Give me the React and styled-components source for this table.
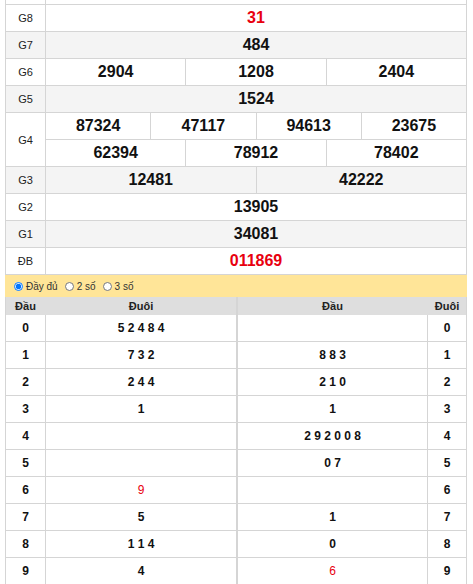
import React from 'react'
import styled, { createGlobalStyle } from 'styled-components'

const line = '#d5d5d5'
const red = '#e8000f'

const GlobalStyle = createGlobalStyle`
    body {
        margin: 0;
        background: #fff;
        font-family: "Liberation Sans", Arial, sans-serif;
        color: #111;
    }
`;

const Page = styled.div`
    width: 462px;
    padding-left: 5px;
`;

const Board = styled.div`
    border-left: 1px solid ${line};
`;

const PrizeRow = styled.div`
    display: flex;
    background: ${p => p.$alt ? '#f4f4f4' : '#fff'};
`;

const Label = styled.div`
    box-sizing: border-box;
    flex: 0 0 40px;
    height: ${p => p.$h ? p.$h + 'px' : 'auto'};
    display: flex;
    align-items: center;
    justify-content: center;
    border-right: 1px solid ${line};
    border-bottom: 1px solid ${line};
    font-size: 11px;
    color: #222;
`;

const Values = styled.div`
    flex: 1;
    display: flex;
    flex-direction: column;
`;

const SubRow = styled.div`
    display: flex;
    height: ${p => p.$h || 27}px;
`;

const Num = styled.div`
    box-sizing: border-box;
    flex: 1;
    display: flex;
    align-items: center;
    justify-content: center;
    border-right: 1px solid ${line};
    border-bottom: 1px solid ${line};
    font-size: 16px;
    font-weight: bold;
    color: ${p => p.$red ? red : '#111'};
`;

const Toolbar = styled.div`
    display: flex;
    align-items: center;
    gap: 7px;
    height: 22px;
    padding-left: 9px;
    margin-top: 0;
    background: #ffe598;
    font-size: 10px;
    color: #333;
`;

const Option = styled.label`
    display: flex;
    align-items: center;
    gap: 3px;
`;

const Radio = styled.input`
    width: 9px;
    height: 9px;
    margin: 0;
`;

const LotoWrap = styled.div`
    display: flex;
`;

const LotoTable = styled.div`
    flex: ${p => p.$left ? '0 0 232px' : '1'};
    box-sizing: border-box;
    display: grid;
    grid-template-columns: ${p => p.$left ? '40px 1fr' : '1fr 39px'};
    border-left: 1px solid ${line};
`;

const Head = styled.div`
    box-sizing: border-box;
    height: 18px;
    display: flex;
    align-items: center;
    justify-content: center;
    background: #dedede;
    border-right: 1px solid ${p => p.$edge ? line : '#dedede'};
    font-size: 11px;
    font-weight: bold;
    color: #222;
`;

const Cell = styled.div`
    box-sizing: border-box;
    height: 27px;
    display: flex;
    align-items: center;
    justify-content: center;
    border-right: 1px solid ${line};
    border-bottom: 1px solid ${line};
    font-size: 12px;
    font-weight: bold;
    white-space: pre;
    color: #111;
`;

const Hot = styled.span`
    color: ${red};
    font-weight: normal;
`;

const prizes = [
    { label: 'G8', rows: [['31']], red: true },
    { label: 'G7', rows: [['484']] },
    { label: 'G6', rows: [['2904', '1208', '2404']] },
    { label: 'G5', rows: [['1524']] },
    { label: 'G4', rows: [['87324', '47117', '94613', '23675'], ['62394', '78912', '78402']] },
    { label: 'G3', rows: [['12481', '42222']] },
    { label: 'G2', rows: [['13905']] },
    { label: 'G1', rows: [['34081']] },
    { label: 'ĐB', rows: [['011869']], red: true },
]

// '!' marks the digit that belongs to the special prize
const tails = ['5 2 4 8 4', '7 3 2', '2 4 4', '1', '', '', '!9', '5', '1 1 4', '4']
const heads = ['', '8 8 3', '2 1 0', '1', '2 9 2 0 0 8', '0 7', '', '1', '0', '!6']

const Digits = ({ text }) =>
    text.startsWith('!') ? <Hot>{text.slice(1)}</Hot> : text

const App = () => {
    return (
        <>
            <GlobalStyle />
            <Page>
                <Board>
                    <PrizeRow>
                        <Label $h={5} />
                        <Values>
                            <SubRow $h={5}><Num /></SubRow>
                        </Values>
                    </PrizeRow>
                    {prizes.map((p, i) => (
                        <PrizeRow key={p.label} $alt={i % 2 === 1}>
                            <Label>{p.label}</Label>
                            <Values>
                                {p.rows.map((r, j) => (
                                    <SubRow key={j}>
                                        {r.map((n, k) => <Num key={k} $red={p.red}>{n}</Num>)}
                                    </SubRow>
                                ))}
                            </Values>
                        </PrizeRow>
                    ))}
                </Board>

                <Toolbar>
                    <Option><Radio type="radio" name="mode" defaultChecked />Đầy đủ</Option>
                    <Option><Radio type="radio" name="mode" />2 số</Option>
                    <Option><Radio type="radio" name="mode" />3 số</Option>
                </Toolbar>

                <LotoWrap>
                    <LotoTable $left>
                        <Head>Đầu</Head>
                        <Head $edge>Đuôi</Head>
                        {tails.map((t, i) => (
                            <React.Fragment key={i}>
                                <Cell>{i}</Cell>
                                <Cell><Digits text={t} /></Cell>
                            </React.Fragment>
                        ))}
                    </LotoTable>
                    <LotoTable>
                        <Head>Đầu</Head>
                        <Head $edge>Đuôi</Head>
                        {heads.map((h, i) => (
                            <React.Fragment key={i}>
                                <Cell><Digits text={h} /></Cell>
                                <Cell>{i}</Cell>
                            </React.Fragment>
                        ))}
                    </LotoTable>
                </LotoWrap>
            </Page>
        </>
    )
}

export default App
